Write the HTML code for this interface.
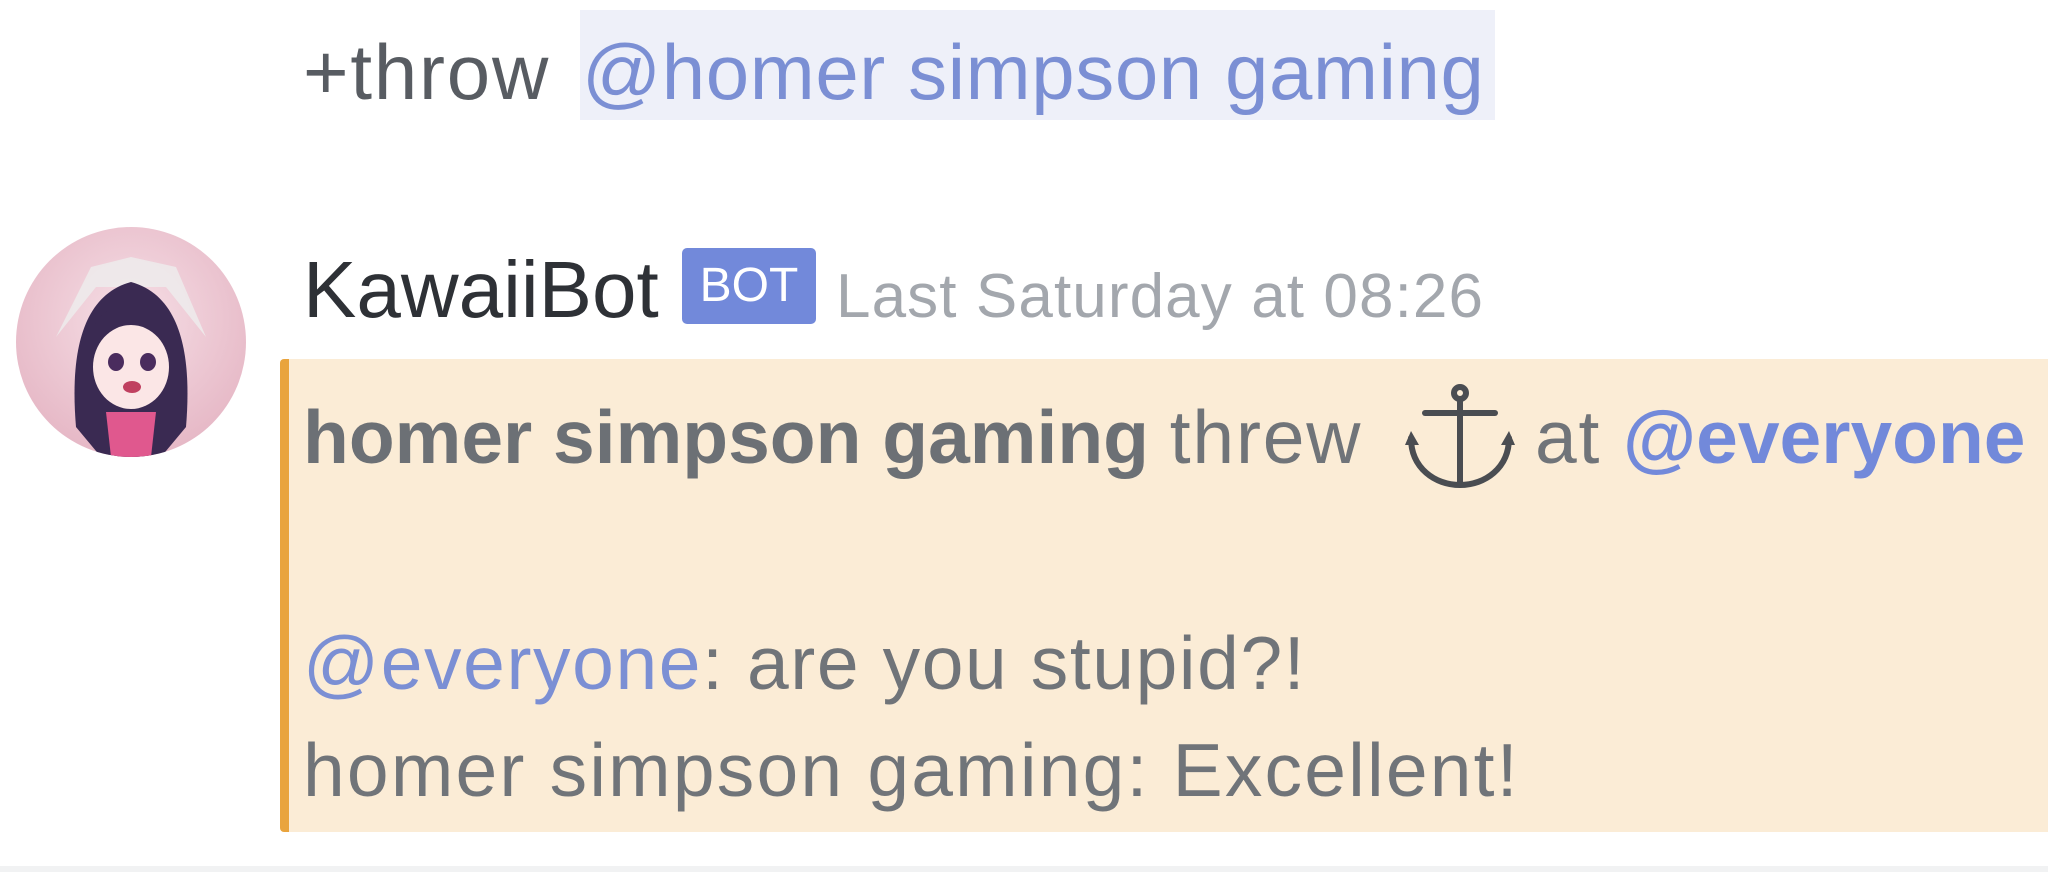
<!DOCTYPE html>
<html><head><meta charset="utf-8"><style>
html,body{margin:0;padding:0;width:2048px;height:872px;background:#fff;overflow:hidden;font-family:"Liberation Sans",sans-serif;}
.abs{position:absolute;white-space:nowrap;}
.m{color:#7b8fd4}
.r{letter-spacing:1.8px}
</style></head><body>
<div class="abs" style="left:580px;top:10px;width:915px;height:110px;background:#eef0f9"></div>
<div class="abs r" style="left:303px;top:22px;font-size:78px;line-height:100px;color:#585c62">+throw</div>
<div class="abs" style="left:582px;top:22px;font-size:78px;line-height:100px;letter-spacing:0.6px" class="m"><span class="m">@homer simpson gaming</span></div>

<svg class="abs" style="left:16px;top:227px" width="230" height="230" viewBox="0 0 230 230">
<defs><radialGradient id="g" cx="50%" cy="40%" r="60%"><stop offset="0" stop-color="#f6dfe6"/><stop offset="1" stop-color="#e6b8c6"/></radialGradient>
<clipPath id="c"><circle cx="115" cy="115" r="115"/></clipPath></defs>
<circle cx="115" cy="115" r="115" fill="url(#g)"/>
<g clip-path="url(#c)">
<path d="M40 110 L75 40 L115 30 L160 40 L190 110 L150 60 L80 60Z" fill="#eee" opacity=".8"/>
<path d="M60 200 C55 140 60 70 115 55 C170 70 175 140 170 200 L145 230 L85 230Z" fill="#3a2a52"/>
<ellipse cx="115" cy="140" rx="38" ry="42" fill="#fbe6e6"/>
<path d="M78 120 C90 90 140 90 152 120 L152 100 C140 70 90 70 78 100Z" fill="#3a2a52"/>
<ellipse cx="100" cy="135" rx="8" ry="9" fill="#4a2c5e"/><ellipse cx="132" cy="135" rx="8" ry="9" fill="#4a2c5e"/>
<ellipse cx="116" cy="160" rx="9" ry="6" fill="#c04060"/>
<path d="M90 185 L140 185 L135 230 L95 230Z" fill="#e0588e"/>
</g></svg>

<div class="abs" style="left:303px;top:245px;font-size:80px;line-height:90px;color:#2e3136">KawaiiBot</div>
<div class="abs" style="left:682px;top:248px;width:134px;height:76px;background:#7289da;border-radius:5px;color:#fff;font-size:48px;line-height:76px;text-align:center">BOT</div>
<div class="abs" style="left:836px;top:257px;font-size:62px;line-height:80px;color:#a3a7ad;letter-spacing:1.1px">Last Saturday at 08:26</div>

<div class="abs" style="left:280px;top:359px;width:1768px;height:473px;background:#fbecd6;border-left:9px solid #e9a43d;border-radius:4px 0 0 4px"></div>
<div class="abs" style="left:303px;top:392px;font-size:75px;line-height:90px;color:#707479"><b style="color:#6c7075">homer simpson gaming</b> <span class="r">threw</span></div>
<div class="abs r" style="left:1535px;top:392px;font-size:75px;line-height:90px;color:#707479">at</div>
<div class="abs" style="left:1623px;top:392px;font-size:75px;line-height:90px;color:#7289da;font-weight:bold">@everyone</div>
<svg class="abs" style="left:1405px;top:383px" width="110" height="108" viewBox="0 0 110 108">
<g fill="none" stroke="#4a4d52" stroke-width="6" stroke-linecap="round">
<circle cx="55" cy="10" r="6"/><line x1="55" y1="16" x2="55" y2="102"/><line x1="20" y1="30" x2="90" y2="30"/>
<path d="M6 55 C6 85 30 102 55 102 C80 102 104 85 104 55"/></g>
<path d="M0 62 L6 48 L14 62Z M96 62 L104 48 L110 62Z" fill="#4a4d52"/></svg>
<div class="abs" style="left:303px;top:618px;font-size:75px;line-height:90px;color:#707479;letter-spacing:1.6px"><span class="m">@everyone</span>: are you stupid?!</div>
<div class="abs" style="left:303px;top:725px;font-size:75px;line-height:90px;color:#707479;letter-spacing:2.2px">homer simpson gaming: Excellent!</div>
<div class="abs" style="left:0;top:866px;width:2048px;height:6px;background:#f1f2f3"></div>
</body></html>
